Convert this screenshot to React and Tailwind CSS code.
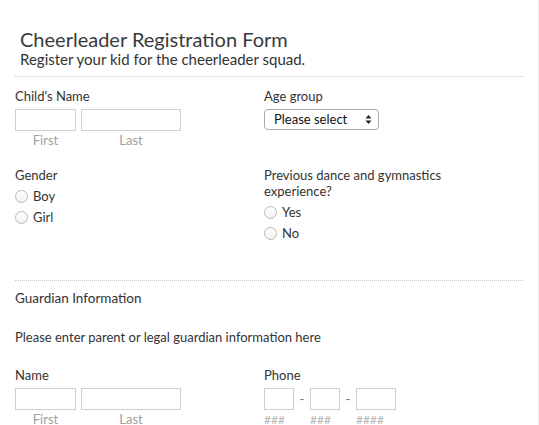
import React from "react";

const font = { fontFamily: "Lato, 'Open Sans', sans-serif" };

function Radio({ label }) {
	return (
		<div className="flex items-center h-[21px]">
			<span className="w-[13px] h-[13px] rounded-full border border-[#b9b9b9] bg-gradient-to-b from-white to-[#f1f1f1] mr-[5px]" />
			<span>{label}</span>
		</div>
	);
}

function Box({ w }) {
	return <div className={"h-[22px] border border-[#cfcfcf] bg-white " + w} />;
}

function NameField({ label }) {
	return (
		<div>
			<div className="h-[22px] leading-[19px]">{label}</div>
			<div className="flex gap-[5px]">
				<div className="w-[61px]">
					<Box w="w-[61px]" />
					<div className="text-center text-[#a0a0a0] leading-[17px] mt-[1px]">First</div>
				</div>
				<div className="w-[100px]">
					<Box w="w-[100px]" />
					<div className="text-center text-[#a0a0a0] leading-[17px] mt-[1px]">Last</div>
				</div>
			</div>
		</div>
	);
}

export default function App() {
	return (
		<div style={font} className="w-[539px] h-[425px] overflow-hidden bg-white text-[#333] text-[13px] border-r border-[#ececec]">
			<div className="pl-[20px] pt-[27px]">
				<h1 className="text-[20px] leading-[24px] text-[#3a3a3a]">Cheerleader Registration Form</h1>
				<p className="text-[15px] leading-[17px] text-[#333]">Register your kid for the cheerleader squad.</p>
			</div>
			<div className="mx-[15px] w-[508px] mt-[8px] border-t border-dotted border-[#c9c9c9]" />

			<div className="px-[15px] pt-[10px] grid grid-cols-[249px_249px]">
				<NameField label="Child's Name" />
				<div>
					<div className="h-[22px] leading-[19px]">Age group</div>
					<div className="w-[115px] h-[21px] rounded-[4px] border border-[#a9a9a9] bg-white flex items-center justify-between pl-[9px] pr-[6px] text-[#111]">
						<span>Please select</span>
						<svg width="7" height="11" viewBox="0 0 7 11">
							<path d="M3.5 1 L6.5 4.5 L0.5 4.5 Z" fill="#222" />
							<path d="M3.5 10 L6.5 6.5 L0.5 6.5 Z" fill="#222" />
						</svg>
					</div>
				</div>
			</div>

			<div className="px-[15px] pt-[18px] grid grid-cols-[249px_249px] h-[131px]">
				<div>
					<div className="leading-[16px] h-[17px]">Gender</div>
					<div className="mt-[2px]">
						<Radio label="Boy" />
						<Radio label="Girl" />
					</div>
				</div>
				<div>
					<div className="leading-[16px] w-[200px]">Previous dance and gymnastics experience?</div>
					<div className="mt-[3px]">
						<Radio label="Yes" />
						<Radio label="No" />
					</div>
				</div>
			</div>

			<div className="mx-[15px] w-[508px] border-t border-dotted border-[#c9c9c9]" />

			<div className="px-[15px]">
				<div className="pt-[9px] text-[13.5px] leading-[17px]">Guardian Information</div>
				<div className="pt-[22px] leading-[17px]">Please enter parent or legal guardian information here</div>
				<div className="pt-[20px] grid grid-cols-[249px_249px]">
					<NameField label="Name" />
					<div>
						<div className="h-[22px] leading-[19px]">Phone</div>
						<div className="flex items-start">
							<div className="w-[30px]">
								<Box w="w-[30px]" />
								<div className="text-[#b5b5b5] leading-[17px] mt-[1px] text-[12px]">###</div>
							</div>
							<span className="w-[16px] text-center leading-[22px] text-[#777]">-</span>
							<div className="w-[30px]">
								<Box w="w-[30px]" />
								<div className="text-[#b5b5b5] leading-[17px] mt-[1px] text-[12px]">###</div>
							</div>
							<span className="w-[16px] text-center leading-[22px] text-[#777]">-</span>
							<div className="w-[40px]">
								<Box w="w-[40px]" />
								<div className="text-[#b5b5b5] leading-[17px] mt-[1px] text-[12px]">####</div>
							</div>
						</div>
					</div>
				</div>
			</div>
		</div>
	);
}
